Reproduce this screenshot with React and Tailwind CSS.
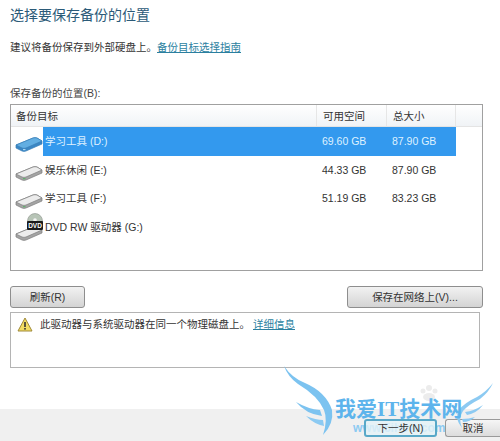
import React from "react";

const drives = [
  { name: "学习工具 (D:)", free: "69.60 GB", total: "87.90 GB", selected: true },
  { name: "娱乐休闲 (E:)", free: "44.33 GB", total: "87.90 GB" },
  { name: "学习工具 (F:)", free: "51.19 GB", total: "83.23 GB" },
  { name: "DVD RW 驱动器 (G:)", free: "", total: "", dvd: true },
];

const DriveIcon = ({ selected }) => {
  const top = selected ? "#62aee2" : "#ececec";
  const side = selected ? "#3a86c4" : "#a4a4a4";
  const line = selected ? "#3a7fb8" : "#7c7c7c";
  return (
    <svg width="28" height="15" viewBox="0 0 28 15" className="shrink-0 mt-[7px]">
      <path d="M1 8 L18 1 Q20 0.4 22 1 L27 4 L27 7 L11 14 Q9 14.8 7 14 L1 11 Z" fill={side} stroke={line} strokeWidth="0.7" />
      <path d="M1 8 L18 1 Q20 0.4 22 1 L27 4 L11 11 Q9 11.8 7 11 Z" fill={top} stroke={line} strokeWidth="0.7" />
      <path d="M8 12.6 L10.5 12.6" stroke={selected ? "#a8d6f2" : "#62b06e"} strokeWidth="1.2" />
    </svg>
  );
};

const DvdIcon = () => (
  <div className="relative w-[28px] h-[28px] shrink-0">
    <svg width="28" height="28" viewBox="0 0 28 28">
      <path d="M1 21 L18 14 L27 17 L27 20 L11 27 Q9 27.8 7 27 L1 24 Z" fill="#a4a4a4" stroke="#7c7c7c" strokeWidth="0.7" />
      <path d="M1 21 L18 14 L27 17 L11 24 Q9 24.8 7 24 Z" fill="#ececec" stroke="#7c7c7c" strokeWidth="0.7" />
      <circle cx="20" cy="8" r="7.5" fill="#b7c4b6" stroke="#8a908a" strokeWidth="0.6" />
      <circle cx="20" cy="7" r="1.8" fill="#f4f4f4" />
      <rect x="12" y="8" width="16" height="9" rx="1" fill="#1c1c1c" />
    </svg>
    <span className="absolute left-[12px] top-[8px] w-[16px] text-center text-[6.5px] leading-[9px] font-bold text-white">DVD</span>
  </div>
);

const WarningIcon = () => (
  <svg width="16" height="15" viewBox="0 0 16 15" className="shrink-0">
    <path d="M8 1 L15 14 L1 14 Z" fill="#f2dc62" stroke="#a08a3a" strokeWidth="1" strokeLinejoin="round" />
    <rect x="7.2" y="5" width="1.6" height="5" fill="#333333" />
    <rect x="7.2" y="11" width="1.6" height="1.6" fill="#333333" />
  </svg>
);

const Watermark = () => (
  <div className="absolute left-[282px] top-[364px] w-[218px] h-[77px] pointer-events-none">
    <svg width="218" height="77" viewBox="0 0 218 77" className="absolute left-0 top-0">
      {/* left wing */}
      <path d="M2 2 Q10 14 23 19 Q44 28 50 46 Q52 60 41 71 Q46 56 42 46 Q36 32 16 20 Q6 13 2 2 Z" fill="#7cc3f0" />
      <path d="M14 38 Q26 45 38 46 L40 52 Q24 50 14 38 Z" fill="#7cc3f0" />
      <path d="M24 52 Q34 56 41 56 L42 62 Q32 60 24 52 Z" fill="#8ccaf2" />
      {/* right wing */}
      <path d="M211 19 Q204 28 195 33 Q182 39 177 46 Q172 54 180 64 Q176 54 181 47 Q186 41 198 35 Q207 28 211 19 Z" fill="#8ccaf2" />
      <path d="M201 41 Q192 47 183 48 L185 51 Q195 49 201 41 Z" fill="#8ccaf2" />
      <path d="M193 53 Q187 55 180 55 L181 58 Q188 58 193 53 Z" fill="#8ccaf2" />
      {/* paw */}
      <circle cx="141" cy="27" r="2.5" fill="#ececec" />
      <circle cx="147" cy="24" r="3" fill="#ececec" />
      <circle cx="153" cy="27" r="2.5" fill="#ececec" />
      <ellipse cx="147" cy="33" rx="6" ry="4" fill="#ececec" />
    </svg>
    <span className="absolute left-[53px] top-[32px] text-[21px] leading-[26px] font-bold whitespace-nowrap text-[#5db4ec] font-['Liberation_Serif','Noto_Sans_CJK_SC',serif]">
      我爱IT技术网
    </span>
    <span className="absolute left-[71px] top-[57px] text-[12px] leading-[14px] font-bold whitespace-nowrap text-[#8ccaf2]">
      www.5ihow.com
    </span>
  </div>
);

export default function App() {
  return (
    <div className="relative w-[500px] h-[441px] overflow-hidden bg-white flex flex-col text-[10.5px] leading-[14px] text-[#333333] font-['Liberation_Sans','Noto_Sans_CJK_SC',sans-serif]">
      <div className="flex-1 px-[10px] pt-[5px]">
        <h1 className="text-[14px] leading-[20px] text-[#2b5a78]">选择要保存备份的位置</h1>
        <p className="mt-[15px]">
          建议将备份保存到外部硬盘上。
          <span className="text-[#2b7f9f] underline">备份目标选择指南</span>
        </p>
        <p className="mt-[32px] text-[#444444]">保存备份的位置(B):</p>

        <div className="mt-[4px] w-[473px] h-[167px] border border-[#a0a0a0]">
          <div className="flex h-[22px] items-center bg-gradient-to-b from-white to-[#f0f3f6] border-b border-[#e4e4e4]">
            <div className="w-[305px] pl-[5px]">备份目标</div>
            <div className="w-[70px] pl-[6px] h-full flex items-center border-l border-[#e6e6e6]">可用空间</div>
            <div className="w-[70px] pl-[6px] h-full flex items-center border-x border-[#e6e6e6]">总大小</div>
          </div>
          {drives.map((d) => (
            <div key={d.name} className="flex h-[28.5px] items-center">
              <div className="w-[32px] pl-[4px] h-full flex items-center">
                {d.dvd ? <DvdIcon /> : <DriveIcon selected={d.selected} />}
              </div>
              <div className={`flex w-[413px] h-full items-center ${d.selected ? "bg-[#3399ee] text-[#dff1ff]" : ""}`}>
                <div className="w-[272px] pl-[2px] whitespace-nowrap">{d.name}</div>
                <div className="w-[70px] pl-[7px]">{d.free}</div>
                <div className="w-[70px] pl-[7px]">{d.total}</div>
              </div>
            </div>
          ))}
        </div>

        <div className="mt-[15px] flex justify-between w-[473px]">
          <button className="w-[75px] h-[22px] rounded-[3px] border border-[#8e8e8e] bg-gradient-to-b from-[#f2f2f2] to-[#d4d4d4]">
            刷新(R)
          </button>
          <button className="w-[136px] h-[22px] rounded-[3px] border border-[#8e8e8e] bg-gradient-to-b from-[#f2f2f2] to-[#d4d4d4]">
            保存在网络上(V)...
          </button>
        </div>

        <div className="mt-[4px] w-[470px] h-[56px] border border-[#b4b4b4] pl-[6px] pt-[4px] flex items-start gap-[7px]">
          <WarningIcon />
          <p>
            此驱动器与系统驱动器在同一个物理磁盘上。
            <span className="ml-[3px] text-[#2b7f9f] underline">详细信息</span>
          </p>
        </div>
      </div>

      <div className="h-[32px] bg-[#f0f0f0] flex items-start justify-end gap-[8px] pt-[10px]">
        <button className="relative z-10 w-[73px] h-[18px] rounded-[3px] border-2 border-[#58a8c8] bg-[#e4f2f8]/80">下一步(N)</button>
        <button className="w-[55px] h-[18px] rounded-l-[3px] border border-r-0 border-[#9a9a9a] bg-gradient-to-b from-[#f6f6f6] to-[#dcdcdc]">
          取消
        </button>
      </div>

      <Watermark />
    </div>
  );
}
